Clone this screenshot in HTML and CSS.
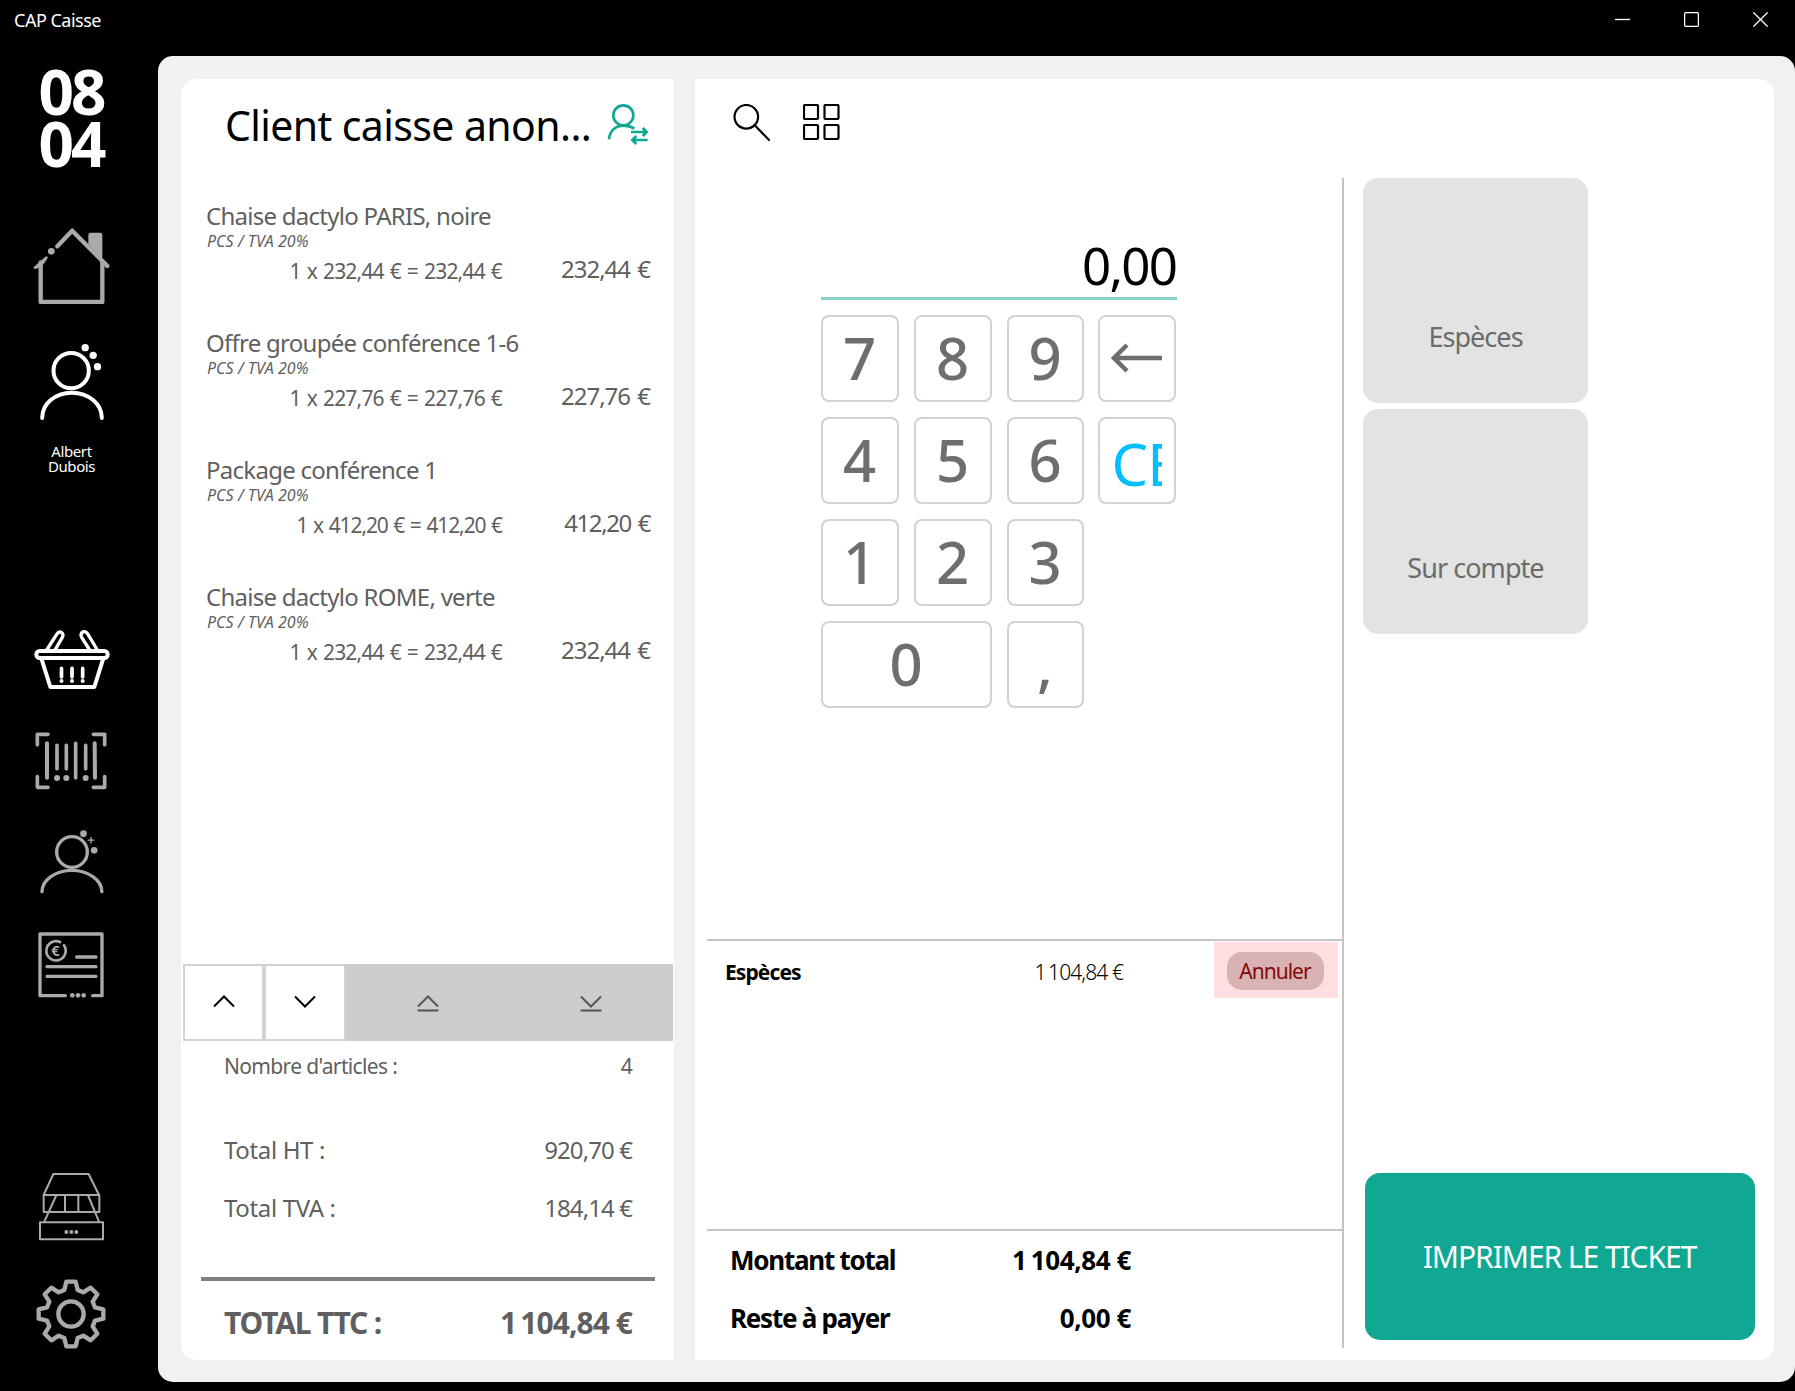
FILE: index.html
```html
<!DOCTYPE html>
<html lang="fr">
<head>
  <meta charset="UTF-8" />
  <meta name="viewport" content="width=device-width, initial-scale=1.0"/>
  <title>CAP Caisse</title>
  <link rel="stylesheet" href="styles.css">
</head>
<body>
  <header class="titlebar">
    <span class="app-name">CAP Caisse</span>
    <div class="window-controls">
      <svg width="15" height="15" viewBox="0 0 15 15"><path d="M0 7.5H15"/></svg>
      <svg width="15" height="15" viewBox="0 0 15 15"><rect x="0.6" y="0.6" width="13.8" height="13.8" rx="1.5"/></svg>
      <svg width="15" height="15" viewBox="0 0 15 15"><path d="M0.4 0.4L14.6 14.6M14.6 0.4L0.4 14.6"/></svg>
    </div>
  </header>

  <div class="app">
    <nav class="sidebar">
      <div class="clock">08<br>04</div>

      <!-- Accueil -->
      <svg class="icon icon-home" width="78" height="77" viewBox="0 0 234 231">
        <path d="M76 58L120.5 11L226 117" stroke-width="13"/>
        <path d="M43 92L9 122L26 116Z" stroke-width="8" class="solid"/>
        <path d="M26 106V225H211V106" stroke-width="13"/>
        <circle cx="58" cy="73" r="10" class="dot"/>
        <path d="M169 50V24q0-7 7-7h28q7 0 7 7v74Z" class="dot"/>
      </svg>

      <!-- Vendeur -->
      <svg class="icon icon-user active" width="66" height="76" viewBox="0 0 198 228">
        <circle cx="96.5" cy="80" r="53" stroke-width="12"/>
        <path d="M9.5 222C9.5 180 48 146 98.5 146S188.5 180 188.5 222" stroke-width="12"/>
        <circle cx="138.5" cy="11" r="11" class="dot"/>
        <circle cx="162.5" cy="34" r="11" class="dot"/>
        <circle cx="175.5" cy="68" r="11" class="dot"/>
      </svg>
      <div class="seller">Albert<br>Dubois</div>

      <!-- Panier -->
      <svg class="icon icon-basket active" width="76" height="60" viewBox="0 0 228 180">
        <rect x="7" y="63" width="214" height="21" rx="10" stroke-width="12"/>
        <path d="M23 88L49 171H181L207 88" stroke-width="12"/>
        <path d="M38 60L68 13Q74 3 82 7Q90 12 85 22L63 60M190 60L162 13Q155 2 146 6Q138 11 143 22L167 60" stroke-width="10"/>
        <path d="M82.5 115V141M114 115V141M146 115V141" stroke-width="11"/>
        <circle cx="82.5" cy="153" r="6" class="dot"/>
        <circle cx="114" cy="153" r="6" class="dot"/>
        <circle cx="146" cy="153" r="6" class="dot"/>
      </svg>

      <!-- Code-barres -->
      <svg class="icon icon-barcode" width="72" height="58" viewBox="0 0 216 174">
        <path d="M39 7H7V38M175 7H209V38M7 134V166H39M209 134V166H175" stroke-width="11"/>
        <path d="M36 34V137M179 34L180 137" stroke-width="12"/>
        <path d="M66 40V110M94 40V110M122 34V137M152 40V110" stroke-width="11"/>
        <circle cx="66" cy="138" r="9" class="dot"/>
        <circle cx="94" cy="138" r="9" class="dot"/>
        <circle cx="152" cy="138" r="9" class="dot"/>
      </svg>

      <!-- Clients -->
      <svg class="icon icon-clients" width="66" height="65" viewBox="0 0 198 195">
        <circle cx="99" cy="66" r="46" stroke-width="10"/>
        <path d="M9 185C9 150 50 121 98.5 121S188.5 150 188.5 185" stroke-width="10"/>
        <circle cx="133.5" cy="11" r="10" class="dot"/>
        <circle cx="165.5" cy="61" r="10" class="dot"/>
        <path d="M156 22V39M147.5 30.5H164.5" stroke-width="4"/>
      </svg>

      <!-- Factures -->
      <svg class="icon icon-invoice" width="66" height="67" viewBox="0 0 198 201">
        <path d="M82 191H6V6H192V191H164" stroke-width="10"/>
        <path d="M66 30A29 29 0 1 0 78 40" stroke-width="8"/>
        <path d="M116 75H174M27 104H174M27 133H174" stroke-width="10"/>
        <circle cx="103" cy="190" r="7" class="dot"/>
        <circle cx="120" cy="190" r="7" class="dot"/>
        <circle cx="137" cy="190" r="7" class="dot"/>
        <text x="52" y="71" class="euro">€</text>
      </svg>

      <!-- Tiroir-caisse -->
      <svg class="icon icon-drawer" width="65" height="68" viewBox="0 0 195 204">
        <path d="M43 3H149L180 66H14Z" stroke-width="6"/>
        <path d="M14 66V117H181V66M78 66V117M118 66V117" stroke-width="6"/>
        <path d="M51 69L16 146M148 69L180 146" stroke-width="6"/>
        <rect x="3" y="148" width="189" height="51" stroke-width="6"/>
        <circle cx="82" cy="177" r="6" class="dot"/>
        <circle cx="97" cy="177" r="6" class="dot"/>
        <circle cx="112" cy="177" r="6" class="dot"/>
      </svg>

      <!-- Réglages -->
      <svg class="icon icon-settings" width="70" height="70" viewBox="-105 -105 210 210">
        <path d="M-14-97H14L20-72L37-65L59-79L79-59L65-37L72-20L97-14V14L72 20L65 37L79 59L59 79L37 65L20 72L14 97H-14L-20 72L-37 65L-59 79L-79 59L-65 37L-72 20L-97 14V-14L-72-20L-65-37L-79-59L-59-79L-37-65L-20-72Z" stroke-width="13"/>
        <circle r="38" stroke-width="13"/>
      </svg>
    </nav>

    <main class="main">
      <section class="ticket">
        <div class="ticket-header">
          <h1>Client caisse anon...</h1>
          <svg width="42" height="42" viewBox="0 0 126 126">
            <circle cx="49" cy="34" r="30"/>
            <path d="M6 106C8 80 26 65 49 65Q68 65 82 74"/>
            <path d="M72 84H118M107 72L119 84L107 96M122 108H76M88 96L76 108L88 120"/>
          </svg>
        </div>

        <div class="lines">
          <div class="line">
            <div class="line-name">Chaise dactylo PARIS, noire</div>
            <div class="line-info">PCS / TVA 20%</div>
            <div class="line-row"><span class="calc">1 x 232,44 € = 232,44 €</span><span class="amount">232,44 €</span></div>
          </div>
          <div class="line">
            <div class="line-name">Offre groupée conférence 1-6</div>
            <div class="line-info">PCS / TVA 20%</div>
            <div class="line-row"><span class="calc">1 x 227,76 € = 227,76 €</span><span class="amount">227,76 €</span></div>
          </div>
          <div class="line">
            <div class="line-name">Package conférence 1</div>
            <div class="line-info">PCS / TVA 20%</div>
            <div class="line-row"><span class="calc calc-tight">1 x 412,20 € = 412,20 €</span><span class="amount amount-tight">412,20 €</span></div>
          </div>
          <div class="line">
            <div class="line-name">Chaise dactylo ROME, verte</div>
            <div class="line-info">PCS / TVA 20%</div>
            <div class="line-row"><span class="calc">1 x 232,44 € = 232,44 €</span><span class="amount">232,44 €</span></div>
          </div>
        </div>

        <div class="scroll-bar">
          <button class="scroll-btn"><svg width="22" height="18" viewBox="0 0 22 18"><path d="M1 12.5L11 2.5L21 12.5"/></svg></button>
          <button class="scroll-btn scroll-down"><svg width="22" height="18" viewBox="0 0 22 18"><path d="M1 2.5L11 12.5L21 2.5"/></svg></button>
          <button class="scroll-end"><svg width="22" height="18" viewBox="0 0 22 18"><path d="M1 12.5L11 2.5L21 12.5M0.5 16.5H21.5"/></svg></button>
          <button class="scroll-end"><svg width="22" height="18" viewBox="0 0 22 18"><path d="M1 2.5L11 12.5L21 2.5M0.5 16.5H21.5"/></svg></button>
        </div>

        <div class="summary">
          <div class="sum-row count"><span>Nombre d'articles :</span><span>4</span></div>
          <div class="sum-row"><span>Total HT :</span><span class="num">920,70 €</span></div>
          <div class="sum-row"><span>Total TVA :</span><span class="num">184,14 €</span></div>
        </div>
        <hr class="separator">
        <div class="total"><span>TOTAL TTC :</span><span class="total-num">1&#8202;&#8202;104,84 €</span></div>
      </section>

      <section class="checkout">
        <div class="toolbar">
          <svg width="38" height="37" viewBox="0 0 38 37">
            <circle cx="13.3" cy="12.8" r="11.8"/>
            <path d="M21.5 21L36 36"/>
          </svg>
          <svg width="37" height="37" viewBox="0 0 37 37">
            <rect x="1" y="1" width="14" height="14" rx="1"/>
            <rect x="21.5" y="1" width="14" height="14" rx="1"/>
            <rect x="1" y="21" width="14" height="14" rx="1"/>
            <rect x="21.5" y="21" width="14" height="14" rx="1"/>
          </svg>
        </div>

        <div class="checkout-body">
          <div class="payment">
            <div class="entry">
              <div class="display">0,00</div>
              <div class="keypad">
                <button class="key">7</button>
                <button class="key">8</button>
                <button class="key">9</button>
                <button class="key key-side"><svg width="52" height="32" viewBox="0 0 52 32"><path d="M51 16H3M16 3L3 16L16 29"/></svg></button>
                <button class="key">4</button>
                <button class="key">5</button>
                <button class="key">6</button>
                <button class="key key-side key-clear"><span>CE</span></button>
                <button class="key">1</button>
                <button class="key">2</button>
                <button class="key">3</button>
                <span></span>
                <button class="key key-wide">0</button>
                <button class="key">,</button>
              </div>
            </div>

            <div class="paid">
              <div class="paid-row">
                <span class="paid-name">Espèces</span>
                <span class="paid-amount">1&#8202;&#8202;104,84 €</span>
                <div class="paid-action"><button class="cancel">Annuler</button></div>
              </div>
            </div>

            <div class="balance">
              <div class="balance-row"><span>Montant total</span><span class="balance-num">1&#8202;&#8202;104,84 €</span></div>
              <div class="balance-row"><span>Reste à payer</span><span class="balance-num">0,00 €</span></div>
            </div>
          </div>

          <div class="methods">
            <button class="method">Espèces</button>
            <button class="method">Sur compte</button>
            <button class="print">IMPRIMER LE TICKET</button>
          </div>
        </div>
      </section>
    </main>
  </div>
</body>
</html>
```
FILE: styles.css
```css
* {
  box-sizing: border-box;
}

html, body {
  height: 100%;
  margin: 0;
  background: #000;
  font-family: "Noto Sans", "Open Sans", sans-serif;
  color: #5f5f5f;
  overflow: hidden;
}

body {
  display: flex;
  flex-direction: column;
}

button {
  font-family: inherit;
  color: inherit;
  border: none;
  padding: 0;
  background: none;
  cursor: pointer;
}

svg {
  display: block;
  flex: none;
  fill: none;
}

/* barre de titre */
.titlebar {
  height: 40px;
  flex: none;
  display: flex;
  justify-content: space-between;
  align-items: center;
  padding: 0 27px 0 14px;
  color: #fff;
}

.app-name {
  font-size: 18px;
  letter-spacing: -0.5px;
}

.window-controls {
  display: flex;
  gap: 54px;
  padding-bottom: 1px;
}

.window-controls svg {
  stroke: #fff;
  stroke-width: 1.3;
}

.app {
  flex: 1;
  display: flex;
  min-height: 0;
}

/* menu de gauche */
.sidebar {
  width: 158px;
  flex: none;
  display: flex;
  flex-direction: column;
  align-items: center;
  padding: 25px 16px 0 0;
  color: #fff;
}

.clock {
  font-size: 62px;
  font-weight: 700;
  line-height: 52px;
  letter-spacing: -3px;
}

.icon {
  stroke: #aaa;
  stroke-linecap: round;
  stroke-linejoin: round;
}

.icon .dot {
  fill: #aaa;
  stroke: none;
}

.icon .solid {
  fill: #aaa;
}

.icon.active {
  stroke: #fff;
}

.icon.active .dot {
  fill: #fff;
}

.icon-home {
  margin-top: 58px;
}

.icon-user {
  margin: 40px 0 0 2px;
}

.seller {
  margin: 24px 0 0 1px;
  font-size: 15px;
  line-height: 15px;
  letter-spacing: -0.4px;
  text-align: center;
}

.icon-basket {
  margin: 156px 0 0 2px;
}

.icon-barcode {
  margin-top: 42px;
}

.icon-clients {
  margin: 40px 0 0 2px;
}

.icon-invoice {
  margin-top: 37px;
}

.icon-drawer {
  margin-top: 174px;
}

.icon-settings {
  margin-top: 38px;
}

.euro {
  font-size: 44px;
  font-weight: 700;
  fill: #aaa;
  stroke: none;
  text-anchor: middle;
}

/* zone principale */
.main {
  flex: 1;
  display: flex;
  gap: 21px;
  margin: 16px 0 9px;
  padding: 23px 21px 22px 23px;
  background: #f1f1f1;
  border-radius: 15px;
}

/* ticket */
.ticket {
  width: 493px;
  flex: none;
  display: flex;
  flex-direction: column;
  background: #fff;
  border-radius: 15px 0 0 15px;
}

.ticket-header {
  height: 91px;
  display: flex;
  align-items: center;
  justify-content: space-between;
  padding: 0 25px 0 44px;
}

.ticket-header h1 {
  margin: 0;
  font-size: 41px;
  font-weight: 400;
  letter-spacing: -0.6px;
  white-space: nowrap;
  color: #000;
}

.ticket-header svg {
  stroke: #11a893;
  stroke-width: 8;
}

.lines {
  flex: 1;
  padding: 32px 24px 0 25px;
}

.line {
  height: 127px;
}

.line-name {
  font-size: 24px;
  line-height: 28px;
  letter-spacing: -0.73px;
}

.line-info {
  font-size: 16px;
  line-height: 22px;
  font-style: italic;
  letter-spacing: 0.05px;
  padding-left: 1px;
}

.line-row {
  height: 38px;
  display: flex;
  justify-content: flex-end;
  align-items: center;
}

.calc {
  font-size: 21px;
  letter-spacing: -0.8px;
  word-spacing: 1.25px;
}

.calc-tight {
  letter-spacing: -1.1px;
}

.amount {
  width: 148px;
  padding-bottom: 6px;
  text-align: right;
  font-size: 24px;
  letter-spacing: -1px;
  word-spacing: 2px;
}

.amount-tight {
  letter-spacing: -1.4px;
}

.scroll-bar {
  height: 77px;
  display: flex;
  margin: 0 1px 0 2px;
  background: #ccc;
}

.scroll-btn {
  width: 81px;
  display: flex;
  align-items: center;
  justify-content: center;
  background: #fff;
  border: 2px solid #d2d2d2;
}

.scroll-down {
  width: 82px;
}

.scroll-bar svg {
  stroke: #000;
  stroke-width: 2;
}

.scroll-end {
  flex: 1;
  display: flex;
  align-items: center;
  justify-content: center;
}

.scroll-end svg {
  stroke: #555;
}

.summary {
  height: 236px;
  padding: 0 42px 0 43px;
}

.sum-row {
  height: 58px;
  display: flex;
  justify-content: space-between;
  align-items: center;
  font-size: 24px;
  letter-spacing: -0.35px;
}

.sum-row.count {
  height: 49px;
  margin-bottom: 30px;
  font-size: 21px;
  letter-spacing: -0.65px;
}

.sum-row .num {
  letter-spacing: -0.9px;
}

.separator {
  width: 454px;
  height: 4px;
  margin: 0 0 0 20px;
  border: none;
  background: #808080;
}

.total {
  height: 79px;
  display: flex;
  justify-content: space-between;
  align-items: center;
  padding: 3px 42px 0 43px;
  font-size: 30px;
  font-weight: 700;
  letter-spacing: -1.2px;
}

.total-num {
  letter-spacing: -0.95px;
}

/* encaissement */
.checkout {
  flex: 1;
  display: flex;
  flex-direction: column;
  background: #fff;
  border-radius: 0 15px 15px 0;
}

.toolbar {
  height: 99px;
  display: flex;
  gap: 32px;
  padding: 25px 38px 0;
}

.toolbar svg {
  stroke: #000;
  stroke-width: 2.2;
  stroke-linecap: round;
}

.checkout-body {
  flex: 1;
  display: flex;
  padding: 0 19px 12px 12px;
}

.payment {
  width: 637px;
  display: flex;
  flex-direction: column;
  border-right: 2px solid #c4c4c4;
}

.entry {
  flex: 1;
  padding: 54px 0 0 114px;
}

.display {
  width: 356px;
  height: 68px;
  line-height: 66px;
  padding-right: 1px;
  border-bottom: 3px solid #86d1c7;
  text-align: right;
  font-size: 51px;
  letter-spacing: -1.8px;
  color: #000;
}

.keypad {
  display: grid;
  grid-template-columns: 78px 78px 77px 78px;
  grid-auto-rows: 87px;
  gap: 15px;
  margin-top: 15px;
}

.key {
  display: flex;
  align-items: center;
  justify-content: center;
  padding: 0 1px 2px 0;
  border: 2px solid #d2d2d2;
  border-radius: 8px;
  background: #fff;
  font-size: 58px;
  font-weight: 500;
  line-height: 80px;
  color: #6e6e6e;
}

.key svg {
  stroke: #6e6e6e;
  stroke-width: 4.5;
}

.key-side {
  margin: 0 1px 0 -1px;
  padding-right: 0;
}

.key-wide {
  grid-column: span 2;
}

/* libellé rogné dans la touche */
.key-clear span {
  width: 49px;
  overflow: hidden;
  padding-top: 8px;
  text-align: left;
  text-indent: -1px;
  font-weight: 400;
  letter-spacing: -1px;
  color: #00bfff;
}

.paid {
  height: 290px;
  border-top: 2px solid #c4c4c4;
}

.paid-row {
  height: 58px;
  display: flex;
  align-items: center;
  padding: 0 4px 0 18px;
  font-size: 21px;
  color: #000;
}

.paid-name {
  width: 180px;
  padding-top: 4px;
  font-weight: 700;
  letter-spacing: -0.9px;
}

.paid-amount {
  width: 218px;
  padding-top: 4px;
  text-align: right;
  font-weight: 300;
  letter-spacing: -0.9px;
}

.paid-action {
  width: 124px;
  height: 56px;
  display: flex;
  align-items: center;
  justify-content: center;
  margin-left: auto;
  padding: 2px 2px 0 0;
  background: #ffdfdf;
}

.cancel {
  width: 97px;
  height: 38px;
  border-radius: 15px;
  background: #d9b3b3;
  font-size: 21px;
  letter-spacing: -1px;
  color: #850808;
}

.balance {
  height: 119px;
  border-top: 2px solid #c4c4c4;
}

.balance-row {
  width: 424px;
  height: 58px;
  display: flex;
  justify-content: space-between;
  align-items: center;
  padding-left: 23px;
  font-size: 26px;
  font-weight: 700;
  letter-spacing: -1.25px;
  color: #000;
}

.balance-num {
  letter-spacing: -0.4px;
}

.methods {
  flex: 1;
  display: flex;
  flex-direction: column;
  gap: 6px;
  padding: 0 0 8px 19px;
}

.method {
  width: 225px;
  height: 225px;
  padding-top: 91px;
  border-radius: 15px;
  background: #e3e3e3;
  font-size: 27px;
  letter-spacing: -0.95px;
  color: #6b6b6b;
}

.print {
  height: 167px;
  margin: auto 0 0 2px;
  padding: 0 1px 1px 0;
  border-radius: 15px;
  background: #11a893;
  font-size: 30px;
  letter-spacing: -1.06px;
  color: #fff;
}
```
